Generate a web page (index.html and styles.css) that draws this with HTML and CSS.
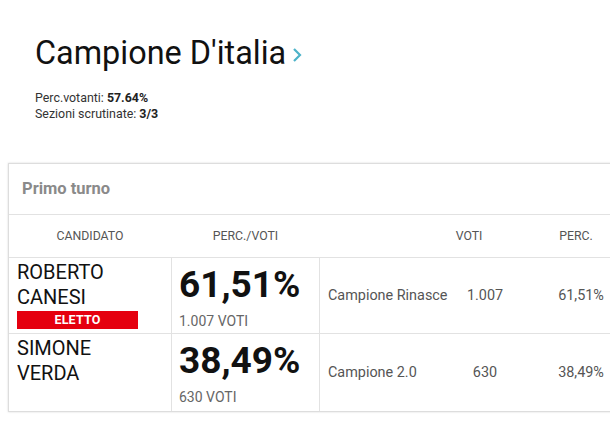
FILE: index.html
```html
<!DOCTYPE html>
<html lang="it">
<head>
<meta charset="utf-8">
<link rel="stylesheet" href="styles.css">
</head>
<body>
<div class="page">
  <header class="head">
    <h1 class="title">Campione D'italia<svg class="chev" width="10" height="16" viewBox="0 0 10 16"><path d="M2 2 L8 8 L2 14" fill="none" stroke="#4db3c9" stroke-width="2.2"/></svg></h1>
    <p class="meta">Perc.votanti: <b>57.64%</b></p>
    <p class="meta">Sezioni scrutinate: <b>3/3</b></p>
  </header>
  <section class="card">
    <div class="turn">Primo turno</div>
    <div class="grid">
      <div class="th c1">CANDIDATO</div>
      <div class="th c2">PERC./VOTI</div>
      <div class="th c3">
        <span class="hname"></span><span class="hvoti">VOTI</span><span class="hperc">PERC.</span>
      </div>

      <div class="td c1 cand">
        <div class="name">ROBERTO<br>CANESI</div>
        <div class="badge">ELETTO</div>
      </div>
      <div class="td c2">
        <div class="pct">61,51%</div>
        <div class="votes">1.007 VOTI</div>
      </div>
      <div class="td c3 lists">
        <span class="lname">Campione Rinasce</span><span class="lvoti">1.007</span><span class="lperc">61,51%</span>
      </div>

      <div class="td c1 cand">
        <div class="name">SIMONE<br>VERDA</div>
      </div>
      <div class="td c2">
        <div class="pct">38,49%</div>
        <div class="votes">630 VOTI</div>
      </div>
      <div class="td c3 lists">
        <span class="lname">Campione 2.0</span><span class="lvoti">630</span><span class="lperc">38,49%</span>
      </div>
    </div>
  </section>
</div>
</body>
</html>
```
FILE: styles.css
```css
html, body {
  margin: 0;
  padding: 0;
  background: #fff;
  overflow: hidden;
}
body {
  font-family: Roboto, "Liberation Sans", Arial, sans-serif;
  color: #111;
}
.page {
  width: 610px;
  height: 431px;
  overflow: hidden;
  padding-top: 33px;
  box-sizing: border-box;
}
.head {
  padding-left: 35px;
  height: 130px;
}
.title {
  margin: 0 0 17px 0;
  font-size: 32.4px;
  font-weight: 400;
  line-height: 40px;
  color: #111;
  display: flex;
  align-items: center;
}
.chev {
  margin-left: 6px;
  margin-top: 4px;
}
.meta {
  margin: 0;
  font-size: 12.4px;
  line-height: 16px;
  color: #333;
}
.meta b {
  font-weight: 700;
  color: #222;
}
.card {
  margin-left: 8px;
  width: 640px;
  border: 1px solid #ddd;
  box-shadow: 0 0 2px rgba(0,0,0,0.15);
  background: #fff;
}
.turn {
  height: 50px;
  line-height: 50px;
  padding-left: 13px;
  font-size: 16.5px;
  font-weight: 700;
  color: #8a8a8a;
  border-bottom: 1px solid #e2e2e2;
}
.grid {
  display: grid;
  grid-template-columns: 162px 149px 1fr;
}
.th {
  height: 42px;
  line-height: 42px;
  font-size: 12.3px;
  color: #555;
  border-bottom: 1px solid #e2e2e2;
  text-align: center;
}
.td {
  height: 76px;
  border-bottom: 1px solid #e2e2e2;
  box-sizing: border-box;
}
.grid > .td:nth-last-child(-n+3) {
  border-bottom: none;
  height: 77px;
}
.td.c2 {
  border-left: 1px solid #e2e2e2;
  border-right: 1px solid #e2e2e2;
  padding: 7px 0 0 7px;
}
.cand {
  padding: 2px 0 0 8px;
}
.name {
  font-size: 20px;
  line-height: 25px;
  color: #111;
}
.badge {
  margin-top: 1px;
  width: 121px;
  height: 18px;
  line-height: 18px;
  background: #e5000f;
  color: #fff;
  font-size: 12.5px;
  font-weight: 700;
  text-align: center;
  letter-spacing: 0.2px;
}
.pct {
  font-size: 37px;
  font-weight: 700;
  line-height: 40px;
  color: #111;
}
.votes {
  margin-top: 8px;
  font-size: 14px;
  line-height: 16px;
  color: #666;
}
.c3 {
  display: flex;
  align-items: center;
  padding-left: 8px;
}
.hname { width: 115px; }
.hvoti { width: 52px; text-align: center; }
.hperc { width: 162px; text-align: center; }
.lname {
  width: 130px;
  font-size: 14.4px;
  color: #555;
  white-space: nowrap;
}
.lvoti {
  width: 54px;
  text-align: center;
  font-size: 14.4px;
  color: #555;
}
.lperc {
  width: 138px;
  text-align: center;
  font-size: 14.4px;
  color: #555;
}
```
